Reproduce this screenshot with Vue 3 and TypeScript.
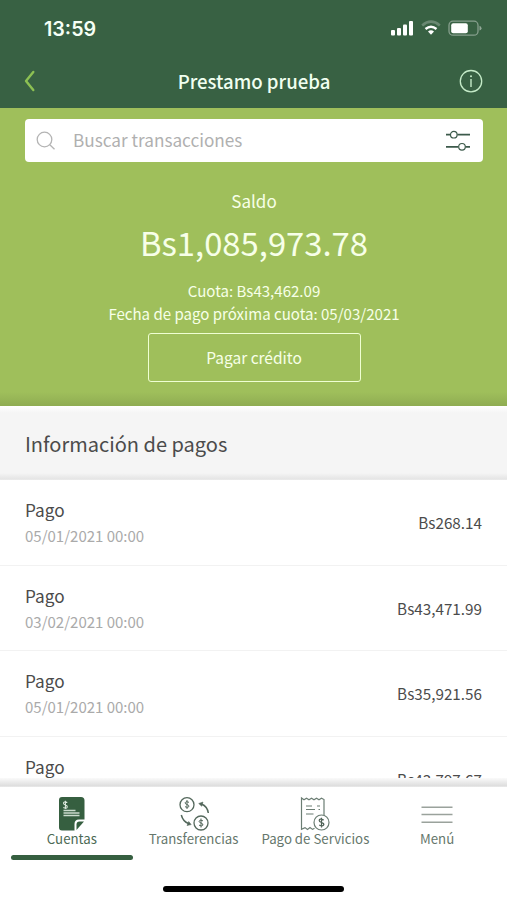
<script setup lang="ts">
interface Payment {
  title: string
  date: string
  amount: string
}

const payments: Payment[] = [
  { title: 'Pago', date: '05/01/2021 00:00', amount: 'Bs268.14' },
  { title: 'Pago', date: '03/02/2021 00:00', amount: 'Bs43,471.99' },
  { title: 'Pago', date: '05/01/2021 00:00', amount: 'Bs35,921.56' },
  { title: 'Pago', date: '', amount: 'Bs43,797.67' },
]
</script>

<template>
  <div class="screen">
    <header class="top">
      <div class="status">
        <span class="clock">13:59</span>
        <svg class="signals" width="94" height="20" viewBox="0 0 94 20">
          <g fill="#fff">
            <rect x="1" y="12" width="4" height="5.5" rx="1" />
            <rect x="7" y="10" width="4" height="7.500" rx="1" />
            <rect x="13" y="6.500" width="4" height="11" rx="1" />
            <rect x="19" y="3" width="4" height="14.500" rx="1" />
          </g>
          <path d="M32.200 7.400Q41 -0.200 49.800 7.400" fill="none" stroke="#fff" stroke-width="2.600" opacity=".25" />
          <path d="M35.500 11Q41 6.300 46.500 11" fill="none" stroke="#fff" stroke-width="2.400" />
          <path d="M38 13.400Q41 11.100 44 13.400L41 16.800Z" fill="#fff" />
          <rect x="59" y="3.200" width="29" height="14" rx="4" fill="none" stroke="#fff" stroke-width="1.300" opacity=".4" />
          <rect x="61.200" y="5.200" width="16.600" height="10" rx="2" fill="#fff" />
          <path d="M89.500 7.800Q91.500 8.600 91.500 10.200T89.500 12.600Z" fill="#fff" opacity=".45" />
        </svg>
      </div>
      <div class="titlebar">
        <svg width="12" height="22" viewBox="0 0 12 22">
          <path d="M9.300 2L2 11L9.300 20" fill="none" stroke="#8dc153" stroke-width="2.400" stroke-linecap="round" stroke-linejoin="round" />
        </svg>
        <h1>Prestamo prueba</h1>
        <svg width="24" height="24" viewBox="0 0 24 24">
          <circle cx="12" cy="12.200" r="10.700" fill="none" stroke="#c5ebc8" stroke-width="1.300" />
          <path d="M12 10v8" stroke="#c5ebc8" stroke-width="1.400" />
          <circle cx="12" cy="7.200" r="1" fill="#c5ebc8" />
        </svg>
      </div>
    </header>

    <section class="hero">
      <div class="search">
        <svg width="20" height="20" viewBox="0 0 20 20" fill="none" stroke="#b4b4b4" stroke-width="1.300">
          <circle cx="8.500" cy="8.500" r="7.300" />
          <path d="M13.800 13.800L18.500 18.300" />
        </svg>
        <span class="placeholder">Buscar transacciones</span>
        <svg class="filter" width="26" height="24" viewBox="0 0 26 24" fill="none" stroke="#3c5a4b">
          <path d="M1 5.700h4.300M12.300 5.700h12.700M1 17.800h12.300M20.500 17.800h4.500" stroke-width="1.800" />
          <circle cx="8.800" cy="5.700" r="3.300" stroke-width="1.200" />
          <circle cx="17" cy="17.800" r="3.300" stroke-width="1.200" />
        </svg>
      </div>
      <div class="label">Saldo</div>
      <div class="balance">Bs1,085,973.78</div>
      <div class="detail quota">Cuota: Bs43,462.09</div>
      <div class="detail">Fecha de pago próxima cuota: 05/03/2021</div>
      <button class="pay" type="button">Pagar crédito</button>
    </section>

    <h2 class="section-title">Información de pagos</h2>

    <main class="list">
      <article v-for="(p, i) in payments" :key="i" class="row">
        <div>
          <div class="name">{{ p.title }}</div>
          <div class="date">{{ p.date }}</div>
        </div>
        <div class="amount">{{ p.amount }}</div>
      </article>
    </main>
    <div class="edge"></div>

    <nav class="tabs">
      <div class="tab active">
        <svg width="28" height="36" viewBox="0 0 28 36">
          <path d="M4 1H23Q26.500 1 26.500 4.500V23.500H21Q16.500 23.500 16.500 28V34.500H4Q1 34.500 1 31.500V4Q1 1 4 1Z" fill="#365f40" />
          <path d="M18.500 34V28.500Q18.500 25.500 21.500 25.500H26Z" fill="#365f40" />
          <path d="M5.500 14.500H17.500M5.500 17H21.500M5.500 19.500H21.500" stroke="#cbdccd" stroke-width="1.300" />
          <path d="M9.300 6.500Q5.500 5 5.500 7.300Q5.500 8.500 7.400 8.900Q9.500 9.600 9.300 11Q8.800 13.200 5.300 11.600M7.400 4.700v8.300" fill="none" stroke="#dce9dd" stroke-width="1.100" />
        </svg>
        <span>Cuentas</span>
      </div>
      <div class="tab">
        <svg width="32" height="36" viewBox="0 0 32 36" fill="none" stroke="#54685c">
          <circle cx="9" cy="8.700" r="7" stroke-width="1.300" />
          <circle cx="23" cy="27" r="7" stroke-width="1.300" />
          <path d="M11 6.300Q7.200 4.700 7.100 6.800Q7.100 8 9 8.500Q11.200 9.100 10.900 10.600Q10 12.200 7 10.700M9 4v9M25 24.800Q21.200 23.200 21.100 25.300Q21.100 26.500 23 27Q25.200 27.600 24.900 29.100Q24 30.700 21 29.200M23 22.500v9" stroke-width="1" />
          <path d="M30.300 17Q29.500 10.500 23.500 8M3.300 19Q5 25.500 10.500 27.500" stroke-width="1.500" />
          <path d="M20.700 7.500L25 6L23.700 10.300ZM13.200 28.600L9 29.600L10.700 25.500Z" fill="#54685c" stroke-width=".5" />
        </svg>
        <span>Transferencias</span>
      </div>
      <div class="tab">
        <svg width="30" height="36" viewBox="0 0 30 36" fill="none" stroke="#6b7d73">
          <path d="M14.500 32.200L12.500 33.400L10 31.600L7.500 33.400L5 31.600L1.500 33.200V2L4 3.800L6.500 2.200L9 3.800L11.500 2.200L14 3.800L16.500 2.200L19 3.800L21.500 2.200L24 3.600V19" stroke-width="1.200" />
          <path d="M6 10H12M6 13.500H15M6 18H13.500M17 10H20M18.500 13.500H20" stroke-width="1.200" />
          <circle cx="21.500" cy="26.500" r="7.500" stroke-width="1.200" />
          <path d="M23.800 24Q19.200 22 19.200 24.600Q19.200 26 21.500 26.500Q24.100 27.100 23.800 28.800Q22.900 30.900 19.200 29M21.500 21.700v9.800" stroke="#4e6156" stroke-width="1.200" />
        </svg>
        <span>Pago de Servicios</span>
      </div>
      <div class="tab">
        <svg width="34" height="36" viewBox="0 0 34 36" stroke="#9aa29c" stroke-width="1.500">
          <path d="M1.500 11.200H32.500M1.500 18.600H32.500M1.500 26.200H32.500" />
        </svg>
        <span>Menú</span>
      </div>
    </nav>
    <div class="home"></div>
  </div>
</template>

<style>
body {
  margin: 0;
  background: #fff;
}
</style>

<style scoped>
.screen {
  width: 507px;
  height: 900px;
  overflow: hidden;
  display: flex;
  flex-direction: column;
  background: #fff;
  color: #4b4b4b;
  font-family: "Noto Sans CJK SC", "Noto Sans", sans-serif;
}
.top {
  flex: none;
  height: 108px;
  background: #386143;
}
.status {
  height: 57px;
  box-sizing: border-box;
  padding: 0 23px 0 44px;
  display: flex;
  align-items: center;
  justify-content: space-between;
  color: #f5fff5;
}
.signals {
  margin-bottom: 1px;
}
.clock {
  font: 600 19.700px/24px Inter, sans-serif;
}
.titlebar {
  height: 48px;
  padding: 0 24px;
  display: flex;
  align-items: center;
  justify-content: space-between;
}
h1 {
  margin: 0 0 0 13px;
  font-size: 18.600px;
  line-height: 28px;
  font-weight: 500;
  color: #f0fff0;
}
.hero {
  flex: none;
  height: 298px;
  box-sizing: border-box;
  padding: 11px 24px 0 25px;
  background: linear-gradient(#9fbf5b 0 284px, #8fac52 298px);
  display: flex;
  flex-direction: column;
  align-items: center;
  color: #f7ffe8;
  white-space: nowrap;
}
.search {
  align-self: stretch;
  height: 43px;
  box-sizing: border-box;
  padding: 0 12px 0 11px;
  background: #fff;
  border-radius: 4px;
  display: flex;
  align-items: center;
}
.placeholder {
  margin: 0 0 1px 17px;
  font-size: 17.200px;
  line-height: 26px;
  color: #b0b0b0;
}
.filter {
  margin-left: auto;
}
.label {
  margin-top: 26px;
  font-size: 17px;
  line-height: 26px;
}
.balance {
  margin-top: 4px;
  font-size: 32.800px;
  line-height: 48px;
}
.detail {
  font-size: 15.050px;
  line-height: 23px;
}
.quota {
  margin-top: 13px;
}
.pay {
  margin-top: 8px;
  width: 213px;
  height: 49px;
  padding: 0 0 2px;
  border: 1.500px solid #efffd2;
  border-radius: 3px;
  background: transparent;
  color: inherit;
  font: 15.500px/24px "Noto Sans CJK SC", sans-serif;
}
.section-title {
  flex: none;
  margin: 0;
  height: 74px;
  box-sizing: border-box;
  padding: 5px 25px 0;
  background: linear-gradient(#fff 0, #f5f5f5 7px, #f5f5f5 67px, #e5e5e5 73px, #eee 74px);
  font-size: 20px;
  line-height: 65px;
  font-weight: 400;
}
.list {
  flex: none;
  height: 298px;
  overflow: hidden;
}
.row {
  height: 85.500px;
  box-sizing: border-box;
  padding: 2px 25px 0;
  border-bottom: 1px solid #f2f2f2;
  display: flex;
  align-items: center;
  justify-content: space-between;
}
.name {
  font-size: 17.200px;
  line-height: 26px;
}
.date {
  height: 26px;
  font-size: 15px;
  line-height: 26px;
  color: #aaa;
}
.amount {
  margin-bottom: 2px;
  font-size: 15.250px;
  line-height: 24px;
}
.edge {
  flex: none;
  height: 9px;
  background: linear-gradient(#fafafa, #ddd 8px, #f0f0f0);
}
.tabs {
  flex: none;
  height: 73px;
  padding: 0 9px 0 11px;
  display: grid;
  grid-template-columns: repeat(4, 1fr);
}
.tab {
  box-sizing: border-box;
  padding-top: 9px;
  border-bottom: 5px solid transparent;
  display: flex;
  flex-direction: column;
  align-items: center;
  font-size: 13.250px;
  line-height: 14px;
  color: #66776c;
  white-space: nowrap;
}
.tab.active {
  position: relative;
  color: #4c6a55;
}
.tab.active::after {
  content: "";
  position: absolute;
  left: 0;
  right: 0;
  bottom: -5px;
  height: 5px;
  border-radius: 3px;
  background: #365f40;
}
.home {
  flex: none;
  width: 181px;
  height: 6px;
  margin: 26px auto 0;
  border-radius: 3px;
  background: #000;
}
</style>
